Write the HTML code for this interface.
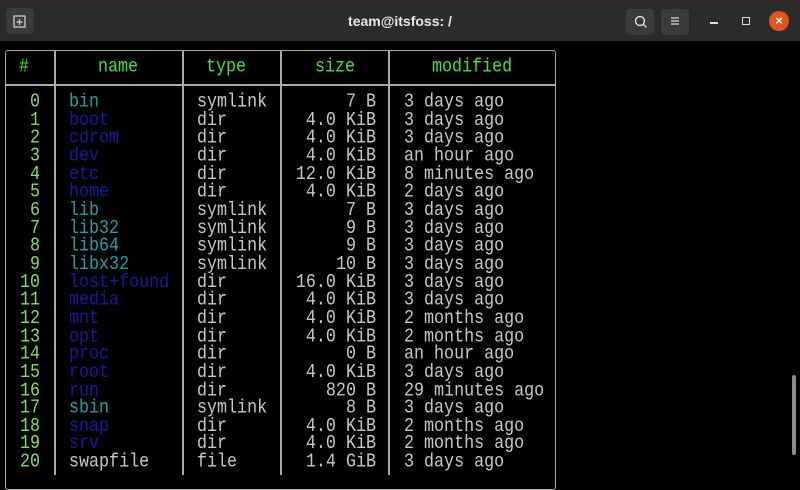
<!DOCTYPE html><html><head><style>
body{margin:0;width:800px;height:475px;background:#000;overflow:hidden;position:relative;font-family:"Liberation Mono",monospace}
.tb{position:absolute;left:0;top:0;width:800px;height:41px;background:#2b2b2b;border-top:1px solid #4a1f2e;box-sizing:border-box}
.btn{position:absolute;top:8px;width:28px;height:26px;background:#3b3b3b;border-radius:4px}
.title{position:absolute;left:0;right:0;top:12px;text-align:center;color:#e8e8e8;font:bold 14px "Liberation Sans",sans-serif}
.box{position:absolute;left:5px;top:50px;width:551px;height:440px;border:1.5px solid #aaa;border-radius:3px;box-sizing:border-box}
.v{position:absolute;top:50px;height:425px;width:1.5px;background:#aaa}
.h{position:absolute;left:5px;width:551px;top:84px;height:1.5px;background:#aaa}
.t{position:absolute;font-size:16.7px;line-height:15.65px;white-space:pre;color:#c8c8c8;transform:scaleY(1.15);transform-origin:0 0}
.g{color:#7ee05a}.hd{color:#3fe33f}.c{color:#20a0a4}.b{color:#1818a0}
.r{text-align:right}
</style></head><body>
<div class="tb">
<div class="btn" style="left:6px;top:7px;width:28px"></div>
<svg style="position:absolute;left:13px;top:14px" width="14" height="14"><rect x="1" y="1" width="11" height="11" fill="none" stroke="#ccc" stroke-width="1.3"/><path d="M6.5 4v6M3.5 7h6" stroke="#ccc" stroke-width="1.3"/></svg>
<div class="title">team@itsfoss: /</div>
<div class="btn" style="left:626px"></div>
<svg style="position:absolute;left:633px;top:13px" width="16" height="16"><circle cx="7" cy="7" r="4.5" fill="none" stroke="#ddd" stroke-width="1.4"/><path d="M10.5 10.5l3 3" stroke="#ddd" stroke-width="1.5"/></svg>
<div class="btn" style="left:661px"></div>
<svg style="position:absolute;left:669px;top:14px" width="12" height="12"><path d="M2 3h8M2 6h8M2 9h8" stroke="#ddd" stroke-width="1.2"/></svg>
<div style="position:absolute;left:710px;top:21px;width:8px;height:1.5px;background:#ddd"></div>
<div style="position:absolute;left:742px;top:16px;width:6px;height:6px;border:1.3px solid #ddd"></div>
<div style="position:absolute;left:769px;top:10px;width:20px;height:20px;border-radius:50%;background:#e5531c;color:#fff;font:bold 13px 'Liberation Sans';text-align:center;line-height:20px">×</div>
</div>
<div class="box"></div>
<div class="v" style="left:54px"></div><div class="v" style="left:182px"></div><div class="v" style="left:280px"></div><div class="v" style="left:388px"></div>
<div class="h"></div>
<div class="t hd" style="left:19px;top:59px">#</div>
<div class="t hd" style="left:98px;top:59px">name</div>
<div class="t hd" style="left:206px;top:59px">type</div>
<div class="t hd" style="left:315px;top:59px">size</div>
<div class="t hd" style="left:432px;top:59px">modified</div>
<div class="t g r" style="left:0;width:40px;top:94px">0
1
2
3
4
5
6
7
8
9
10
11
12
13
14
15
16
17
18
19
20</div>
<div class="t" style="left:69px;top:94px"><span class="c">bin</span>
<span class="b">boot</span>
<span class="b">cdrom</span>
<span class="b">dev</span>
<span class="b">etc</span>
<span class="b">home</span>
<span class="c">lib</span>
<span class="c">lib32</span>
<span class="c">lib64</span>
<span class="c">libx32</span>
<span class="b">lost+found</span>
<span class="b">media</span>
<span class="b">mnt</span>
<span class="b">opt</span>
<span class="b">proc</span>
<span class="b">root</span>
<span class="b">run</span>
<span class="c">sbin</span>
<span class="b">snap</span>
<span class="b">srv</span>
swapfile</div>
<div class="t" style="left:197px;top:94px">symlink
dir
dir
dir
dir
dir
symlink
symlink
symlink
symlink
dir
dir
dir
dir
dir
dir
dir
symlink
dir
dir
file</div>
<div class="t r" style="left:280px;width:96px;top:94px">7 B
4.0 KiB
4.0 KiB
4.0 KiB
12.0 KiB
4.0 KiB
7 B
9 B
9 B
10 B
16.0 KiB
4.0 KiB
4.0 KiB
4.0 KiB
0 B
4.0 KiB
820 B
8 B
4.0 KiB
4.0 KiB
1.4 GiB</div>
<div class="t" style="left:404px;top:94px">3 days ago
3 days ago
3 days ago
an hour ago
8 minutes ago
2 days ago
3 days ago
3 days ago
3 days ago
3 days ago
3 days ago
3 days ago
2 months ago
2 months ago
an hour ago
3 days ago
29 minutes ago
3 days ago
2 months ago
2 months ago
3 days ago</div>
<div style="position:absolute;left:792px;top:375px;width:4px;height:80px;background:#8a8a8a;border-radius:2px"></div>
</body></html>
